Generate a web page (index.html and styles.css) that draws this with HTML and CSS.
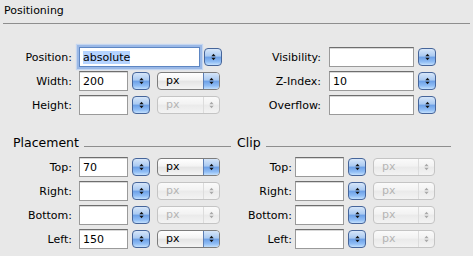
FILE: index.html
```html
<!DOCTYPE html>
<html lang="en">
<head>
    <meta charset="UTF-8">
    <title>Positioning</title>
    <link rel="stylesheet" href="styles.css">
</head>
<body>
    <div class="panel">
        <header class="panel-head">
            <h1>Positioning</h1>
        </header>

        <div class="top">
            <div class="col">
                <div class="row">
                    <span class="label">Position:</span>
                    <div class="field field-wide focused"><span class="sel">absolute</span></div>
                    <span class="spin"><svg viewBox="0 0 7 9"><polygon points="3.5,0 6.5,3.4 0.5,3.4"/><polygon points="0.5,5.6 6.5,5.6 3.5,9"/></svg></span>
                </div>
                <div class="row">
                    <span class="label">Width:</span>
                    <div class="field">200</div>
                    <span class="spin"><svg viewBox="0 0 7 9"><polygon points="3.5,0 6.5,3.4 0.5,3.4"/><polygon points="0.5,5.6 6.5,5.6 3.5,9"/></svg></span>
                    <span class="select"><span class="select-text">px</span><span class="select-arrows"><svg viewBox="0 0 7 9"><polygon points="3.5,0 6.5,3.4 0.5,3.4"/><polygon points="0.5,5.6 6.5,5.6 3.5,9"/></svg></span></span>
                </div>
                <div class="row">
                    <span class="label">Height:</span>
                    <div class="field"></div>
                    <span class="spin"><svg viewBox="0 0 7 9"><polygon points="3.5,0 6.5,3.4 0.5,3.4"/><polygon points="0.5,5.6 6.5,5.6 3.5,9"/></svg></span>
                    <span class="select disabled"><span class="select-text">px</span><span class="select-arrows"><svg viewBox="0 0 7 9"><polygon points="3.5,0 6.5,3.4 0.5,3.4"/><polygon points="0.5,5.6 6.5,5.6 3.5,9"/></svg></span></span>
                </div>
            </div>

            <div class="col col-right">
                <div class="row">
                    <span class="label">Visibility:</span>
                    <div class="field field-mid"></div>
                    <span class="spin"><svg viewBox="0 0 7 9"><polygon points="3.5,0 6.5,3.4 0.5,3.4"/><polygon points="0.5,5.6 6.5,5.6 3.5,9"/></svg></span>
                </div>
                <div class="row">
                    <span class="label">Z-Index:</span>
                    <div class="field field-mid">10</div>
                    <span class="spin"><svg viewBox="0 0 7 9"><polygon points="3.5,0 6.5,3.4 0.5,3.4"/><polygon points="0.5,5.6 6.5,5.6 3.5,9"/></svg></span>
                </div>
                <div class="row">
                    <span class="label">Overflow:</span>
                    <div class="field field-mid"></div>
                    <span class="spin"><svg viewBox="0 0 7 9"><polygon points="3.5,0 6.5,3.4 0.5,3.4"/><polygon points="0.5,5.6 6.5,5.6 3.5,9"/></svg></span>
                </div>
            </div>
        </div>

        <div class="bottom">
            <div class="col">
                <div class="group-head"><h2>Placement</h2><span class="rule"></span></div>
                <div class="row">
                    <span class="label">Top:</span>
                    <div class="field">70</div>
                    <span class="spin"><svg viewBox="0 0 7 9"><polygon points="3.5,0 6.5,3.4 0.5,3.4"/><polygon points="0.5,5.6 6.5,5.6 3.5,9"/></svg></span>
                    <span class="select"><span class="select-text">px</span><span class="select-arrows"><svg viewBox="0 0 7 9"><polygon points="3.5,0 6.5,3.4 0.5,3.4"/><polygon points="0.5,5.6 6.5,5.6 3.5,9"/></svg></span></span>
                </div>
                <div class="row">
                    <span class="label">Right:</span>
                    <div class="field"></div>
                    <span class="spin"><svg viewBox="0 0 7 9"><polygon points="3.5,0 6.5,3.4 0.5,3.4"/><polygon points="0.5,5.6 6.5,5.6 3.5,9"/></svg></span>
                    <span class="select disabled"><span class="select-text">px</span><span class="select-arrows"><svg viewBox="0 0 7 9"><polygon points="3.5,0 6.5,3.4 0.5,3.4"/><polygon points="0.5,5.6 6.5,5.6 3.5,9"/></svg></span></span>
                </div>
                <div class="row">
                    <span class="label">Bottom:</span>
                    <div class="field"></div>
                    <span class="spin"><svg viewBox="0 0 7 9"><polygon points="3.5,0 6.5,3.4 0.5,3.4"/><polygon points="0.5,5.6 6.5,5.6 3.5,9"/></svg></span>
                    <span class="select disabled"><span class="select-text">px</span><span class="select-arrows"><svg viewBox="0 0 7 9"><polygon points="3.5,0 6.5,3.4 0.5,3.4"/><polygon points="0.5,5.6 6.5,5.6 3.5,9"/></svg></span></span>
                </div>
                <div class="row">
                    <span class="label">Left:</span>
                    <div class="field">150</div>
                    <span class="spin"><svg viewBox="0 0 7 9"><polygon points="3.5,0 6.5,3.4 0.5,3.4"/><polygon points="0.5,5.6 6.5,5.6 3.5,9"/></svg></span>
                    <span class="select"><span class="select-text">px</span><span class="select-arrows"><svg viewBox="0 0 7 9"><polygon points="3.5,0 6.5,3.4 0.5,3.4"/><polygon points="0.5,5.6 6.5,5.6 3.5,9"/></svg></span></span>
                </div>
            </div>

            <div class="col col-clip">
                <div class="group-head"><h2>Clip</h2><span class="rule"></span></div>
                <div class="row">
                    <span class="label">Top:</span>
                    <div class="field"></div>
                    <span class="spin"><svg viewBox="0 0 7 9"><polygon points="3.5,0 6.5,3.4 0.5,3.4"/><polygon points="0.5,5.6 6.5,5.6 3.5,9"/></svg></span>
                    <span class="select disabled"><span class="select-text">px</span><span class="select-arrows"><svg viewBox="0 0 7 9"><polygon points="3.5,0 6.5,3.4 0.5,3.4"/><polygon points="0.5,5.6 6.5,5.6 3.5,9"/></svg></span></span>
                </div>
                <div class="row">
                    <span class="label">Right:</span>
                    <div class="field"></div>
                    <span class="spin"><svg viewBox="0 0 7 9"><polygon points="3.5,0 6.5,3.4 0.5,3.4"/><polygon points="0.5,5.6 6.5,5.6 3.5,9"/></svg></span>
                    <span class="select disabled"><span class="select-text">px</span><span class="select-arrows"><svg viewBox="0 0 7 9"><polygon points="3.5,0 6.5,3.4 0.5,3.4"/><polygon points="0.5,5.6 6.5,5.6 3.5,9"/></svg></span></span>
                </div>
                <div class="row">
                    <span class="label">Bottom:</span>
                    <div class="field"></div>
                    <span class="spin"><svg viewBox="0 0 7 9"><polygon points="3.5,0 6.5,3.4 0.5,3.4"/><polygon points="0.5,5.6 6.5,5.6 3.5,9"/></svg></span>
                    <span class="select disabled"><span class="select-text">px</span><span class="select-arrows"><svg viewBox="0 0 7 9"><polygon points="3.5,0 6.5,3.4 0.5,3.4"/><polygon points="0.5,5.6 6.5,5.6 3.5,9"/></svg></span></span>
                </div>
                <div class="row">
                    <span class="label">Left:</span>
                    <div class="field"></div>
                    <span class="spin"><svg viewBox="0 0 7 9"><polygon points="3.5,0 6.5,3.4 0.5,3.4"/><polygon points="0.5,5.6 6.5,5.6 3.5,9"/></svg></span>
                    <span class="select disabled"><span class="select-text">px</span><span class="select-arrows"><svg viewBox="0 0 7 9"><polygon points="3.5,0 6.5,3.4 0.5,3.4"/><polygon points="0.5,5.6 6.5,5.6 3.5,9"/></svg></span></span>
                </div>
            </div>
        </div>
    </div>
</body>
</html>
```

FILE: styles.css
```css
:root {
    --panel-bg: #e8e8e8;
    --rule: #8e8e8e;
    --text: #000;
    --muted: #b4b4b4;
}

* {
    box-sizing: border-box;
    margin: 0;
    padding: 0;
}

body {
    font-family: 'DejaVu Sans', sans-serif;
    font-size: 11px;
    color: var(--text);
    background-color: var(--panel-bg);
    width: 473px;
    height: 256px;
    overflow: hidden;
}

.panel-head {
    padding: 4px 3px 0 3px;
}

h1 {
    font-size: 11px;
    font-weight: normal;
    line-height: 14px;
    padding-left: 1px;
    padding-bottom: 5px;
    border-bottom: 1px solid var(--rule);
}

.top,
.bottom {
    display: grid;
    grid-template-columns: 233px 1fr;
}

.top {
    margin-top: 21px;
}

.bottom {
    margin-top: 18px;
}

.row {
    display: flex;
    align-items: center;
    height: 24px;
}

.label {
    width: 72px;
    text-align: right;
    margin-right: 7px;
    flex-shrink: 0;
}

.col-right .label {
    width: 88px;
    margin-right: 8px;
}

.col-clip .label {
    width: 59px;
    margin-right: 3px;
}

/* text fields */
.field {
    width: 49px;
    height: 20px;
    background: #fff;
    border: 1px solid #9a9a9a;
    border-top-color: #6e6e6e;
    box-shadow: inset 0 1px 0 #d8d8d8;
    padding: 2px 3px 0;
    line-height: 15px;
    flex-shrink: 0;
}

.field-wide {
    width: 121px;
}

.field-mid {
    width: 85px;
}

.focused {
    border-color: #5d86c3;
    box-shadow: 0 0 0 2px #9ab8e6, 0 0 1px 3px #c4d6f0;
}

.sel {
    background: #b5d3ff;
}

/* stepper buttons */
.spin {
    display: flex;
    align-items: center;
    justify-content: center;
    width: 18px;
    height: 18px;
    margin-left: 4px;
    border: 1px solid #46659a;
    border-radius: 4px;
    background: linear-gradient(#d6e6f9 0%, #a9c9f1 45%, #6b9fe6 50%, #8fbdf5 80%, #c4e0fd 100%);
    flex-shrink: 0;
}

.spin svg,
.select-arrows svg {
    width: 5px;
    height: 8px;
    fill: #111;
}

/* unit popups */
.select {
    display: flex;
    width: 63px;
    height: 18px;
    margin-left: 7px;
    border: 1px solid #7d7d7d;
    border-radius: 4px;
    overflow: hidden;
    background: linear-gradient(#ffffff 0%, #f3f3f3 45%, #e4e4e4 50%, #f4f4f4 100%);
    flex-shrink: 0;
}

.select-text {
    flex: 1;
    padding-left: 8px;
    line-height: 16px;
}

.select-arrows {
    display: flex;
    align-items: center;
    justify-content: center;
    width: 16px;
    border-left: 1px solid #5d7fb5;
    background: linear-gradient(#d6e6f9 0%, #a9c9f1 45%, #6b9fe6 50%, #8fbdf5 80%, #c4e0fd 100%);
}

.col-clip .select {
    width: 62px;
}

.select.disabled {
    border-color: #c4c4c4;
    background: linear-gradient(#fafafa 0%, #f2f2f2 45%, #eaeaea 50%, #f3f3f3 100%);
    color: var(--muted);
}

.select.disabled .select-arrows {
    border-left-color: #dcdcdc;
    background: none;
}

.select.disabled svg {
    fill: #a8a8a8;
}

/* group headings */
.group-head {
    display: flex;
    align-items: flex-end;
    height: 16px;
    margin-bottom: 4px;
    padding-left: 13px;
}

.col-clip .group-head {
    padding-left: 4px;
}

h2 {
    font-size: 12.5px;
    font-weight: normal;
    line-height: 16px;
}

.rule {
    flex: 1;
    margin-left: 5px;
    margin-right: 2px;
    margin-bottom: 4px;
    border-bottom: 1px solid var(--rule);
}

.col-clip .rule {
    margin-right: 22px;
}
```
